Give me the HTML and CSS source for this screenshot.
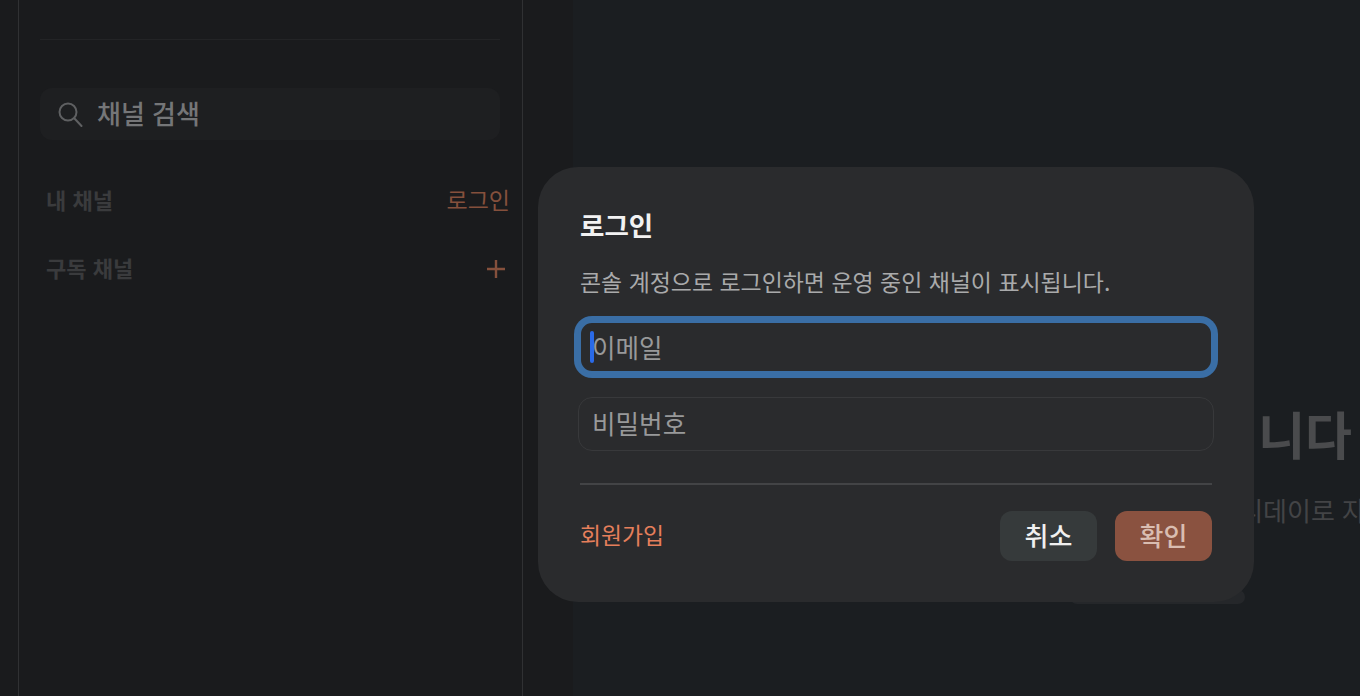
FILE: index.html
```html
<!DOCTYPE html>
<html lang="ko">
  <head>
    <meta charset="utf-8">
    <link rel="stylesheet" href="styles.css">
  </head>
  <body>
    <div class="app">
      <div class="rail"></div>
      <aside class="sidebar">
        <div class="sidebar-divider"></div>
        <div class="search">
          <svg class="search-icon" width="26" height="26" viewBox="0 0 26 26" fill="none" stroke="#5f6062" stroke-width="2">
            <circle cx="11" cy="11" r="8.5" />
            <path d="M17.5 17.5L24.5 25" stroke-linecap="round" />
          </svg>
          <span class="search-text">채널 검색</span>
        </div>
        <div class="section-row first">
          <span class="section-title">내 채널</span>
          <span class="section-link">로그인</span>
        </div>
        <div class="section-row">
          <span class="section-title">구독 채널</span>
          <svg class="plus-icon" width="20" height="20" viewBox="0 0 20 20" stroke="#85503c" stroke-width="2.4">
            <path d="M10 1V19M1 10H19" />
          </svg>
        </div>
      </aside>
      <div class="gutter"></div>
      <main class="main">
        <h2 class="empty-title">채널을 선택하면 일정이 보입니다</h2>
        <p class="empty-text">일정을 추가하면 남은 기간을 디데이로 자동 계산합니다</p>
      </main>
    </div>

    <div class="modal-shadow"></div>
    <div class="modal">
      <h1 class="modal-title">로그인</h1>
      <p class="modal-text">콘솔 계정으로 로그인하면 운영 중인 채널이 표시됩니다.</p>
      <div class="field">
        <input class="input focused" type="text" placeholder="이메일">
        <span class="caret"></span>
      </div>
      <div class="field">
        <input class="input" type="password" placeholder="비밀번호">
      </div>
      <div class="modal-divider"></div>
      <div class="modal-footer">
        <a class="signup">회원가입</a>
        <div class="buttons">
          <button class="btn cancel">취소</button>
          <button class="btn confirm">확인</button>
        </div>
      </div>
    </div>
  </body>
</html>
```

FILE: styles.css
```css
* {
  box-sizing: border-box;
}

html,
body {
  margin: 0;
  height: 100%;
  overflow: hidden;
}

body {
  background: #1b1e21;
  font-family: "Noto Sans CJK KR", "Noto Sans", sans-serif;
}

.app {
  display: flex;
  height: 696px;
}

.rail {
  width: 19px;
  background: #1a1b1d;
  border-right: 1px solid #303133;
}

.sidebar {
  width: 504px;
  padding: 39px 22px 0 21px;
  background: #1a1b1d;
  border-right: 1px solid #303133;
}

.sidebar-divider {
  height: 1px;
  background: #232426;
}

.search {
  display: flex;
  align-items: center;
  gap: 14px;
  height: 52px;
  margin-top: 48px;
  padding-left: 17px;
  background: #1e1f21;
  border-radius: 12px;
}

.search-text {
  margin-top: -3px;
  color: #757678;
  font-size: 26px;
  font-weight: 500;
}

.section-row {
  display: flex;
  align-items: center;
  justify-content: space-between;
  height: 34px;
  margin-top: 34px;
  padding: 0 0 0 6px;
  margin-right: -10px;
}

.section-row.first {
  margin-top: 42px;
}

.section-title {
  color: #3a3b3d;
  font-size: 22px;
  font-weight: 700;
}

.section-link {
  color: #85503c;
  font-size: 23px;
}

.plus-icon {
  margin: 3px 4px 0 0;
}

.gutter {
  width: 50px;
  background: #1a1b1d;
}

.main {
  flex: 1;
  min-width: 0;
  padding-top: 397px;
  overflow: hidden;
  white-space: nowrap;
  background: #1b1e21;
}

.empty-title {
  margin: 0;
  width: 779px;
  text-align: right;
  color: #4a4b4d;
  font-size: 51px;
  font-weight: 700;
  line-height: 72px;
}

.empty-text {
  margin: 23px 0 0 350px;
  color: #434446;
  font-size: 26px;
  line-height: 36px;
}

.modal {
  position: absolute;
  left: 538px;
  top: 167px;
  width: 716px;
  height: 435px;
  padding: 38px 42px 0;
  background: #2a2b2d;
  border-radius: 40px;
}

.modal-shadow {
  position: absolute;
  left: 1070px;
  top: 590px;
  width: 175px;
  height: 14px;
  background: #25272a;
  border-radius: 10px;
}

.modal-title {
  margin: 0;
  color: #f2f2f2;
  font-size: 26.5px;
  font-weight: 700;
  line-height: 40px;
}

.modal-text {
  margin: 19px 0 0 0;
  color: #a9aaab;
  font-size: 22.95px;
  line-height: 34px;
  white-space: nowrap;
}

.field {
  position: relative;
  margin: 22px -2px 0;
}

.field + .field {
  margin-top: 23px;
}

.input {
  display: block;
  width: 100%;
  height: 54px;
  padding: 0 13px 3px;
  color: #ddd;
  background: #2a2b2d;
  border: 1px solid #38393b;
  border-radius: 14px;
  font-family: inherit;
  font-size: 25.6px;
  outline: none;
}

.input::placeholder {
  color: #98999a;
  opacity: 1;
}

.input.focused {
  padding-bottom: 2px;
  padding-left: 11px;
  border: 3px solid #3a6ea5;
  box-shadow: 0 0 0 4px #3a6ea5;
}

.caret {
  position: absolute;
  left: 12px;
  top: 11px;
  width: 4px;
  height: 32px;
  background: #2a6ae8;
  border-radius: 2px;
}

.modal-divider {
  height: 2px;
  margin-top: 32px;
  background: #434446;
}

.modal-footer {
  display: flex;
  align-items: center;
  justify-content: space-between;
  margin-top: 26px;
}

.signup {
  padding-bottom: 4px;
  color: #e57f5b;
  font-size: 22.8px;
}

.buttons {
  display: flex;
  gap: 18px;
}

.btn {
  width: 97px;
  height: 50px;
  padding: 0 0 4px;
  border: none;
  border-radius: 12px;
  font-family: inherit;
  font-size: 26px;
  font-weight: 500;
}

.cancel {
  color: #f0f0f0;
  background: #363a3b;
}

.confirm {
  color: #d9bdb1;
  background: #8a5240;
}
```
